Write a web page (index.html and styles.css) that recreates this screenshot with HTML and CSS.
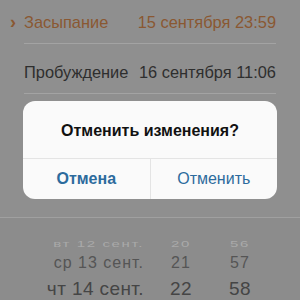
FILE: index.html
```html
<!DOCTYPE html>
<html lang="ru">
<head>
<meta charset="utf-8">
<link rel="stylesheet" href="styles.css">
</head>
<body>
<div class="screen">
  <div class="list">
    <div class="row active">
      <span class="label"><span class="chev">›</span>Засыпание</span>
      <span class="value">15 сентября 23:59</span>
    </div>
    <div class="row">
      <span class="label">Пробуждение</span>
      <span class="value">16 сентября 11:06</span>
    </div>
  </div>
  <div class="picker">
    <div class="prow far">
      <span class="pdate">вт 12 сент.</span><span class="ph">20</span><span class="pm">56</span>
    </div>
    <div class="prow mid">
      <span class="pdate">ср 13 сент.</span><span class="ph">21</span><span class="pm">57</span>
    </div>
    <div class="prow near">
      <span class="pdate">чт 14 сент.</span><span class="ph">22</span><span class="pm">58</span>
    </div>
  </div>
  <div class="alert">
    <div class="alert-title">Отменить изменения?</div>
    <div class="alert-actions">
      <div class="btn cancel">Отмена</div>
      <div class="btn confirm">Отменить</div>
    </div>
  </div>
</div>
</body>
</html>
```

FILE: styles.css
```css
html, body {
  margin: 0;
  padding: 0;
}
body {
  background: #8f8f8f;
  font-family: "Liberation Sans", "Noto Sans", sans-serif;
}
.screen {
  position: relative;
  width: 300px;
  height: 300px;
  overflow: hidden;
  background: #8f8f8f;
}
.list {
  margin-top: -6px;
}
.row {
  height: 50px;
  margin-left: 24px;
  margin-right: 24px;
  border-bottom: 1px solid #a3a3a3;
  display: flex;
  align-items: center;
  justify-content: space-between;
  font-size: 16.4px;
  color: #2e2e2e;
  padding-top: 7px;
  box-sizing: border-box;
}
.row .label {
  position: relative;
}
.row.active {
  color: #8a5832;
}
.chev {
  position: absolute;
  left: -14px;
  top: -1px;
  font-weight: bold;
  font-size: 18px;
}
.picker {
  margin-top: 123px;
  border-top: 1px solid #a0a0a0;
  height: 90px;
  background: #8c8c8c;
  padding-top: 16px;
  box-sizing: border-box;
}
.prow {
  display: grid;
  grid-template-columns: 144px 74px 44px;
  align-items: center;
}
.pdate {
  text-align: right;
}
.ph, .pm {
  text-align: center;
}
.prow.far {
  height: 18px;
  font-size: 15px;
  color: #a9a9a9;
  letter-spacing: 1.6px;
  transform: scaleY(0.62);
}
.prow.mid {
  height: 22px;
  font-size: 16px;
  color: #555555;
  letter-spacing: 1px;
}
.prow.near {
  height: 27px;
  font-size: 19px;
  color: #454545;
  letter-spacing: 0.4px;
  margin-top: 1px;
}
.alert {
  position: absolute;
  left: 23px;
  top: 101px;
  width: 254px;
  height: 98px;
  background: #fafafa;
  border-radius: 12px;
  display: flex;
  flex-direction: column;
  overflow: hidden;
}
.alert-title {
  height: 58px;
  display: flex;
  align-items: center;
  justify-content: center;
  font-size: 16px;
  font-weight: bold;
  color: #111;
  border-bottom: 1px solid #e4e4e4;
  padding-top: 3px;
  box-sizing: border-box;
}
.alert-actions {
  flex: 1;
  display: flex;
}
.btn {
  flex: 1;
  display: flex;
  align-items: center;
  justify-content: center;
  font-size: 16px;
  color: #2c6b9d;
}
.btn.cancel {
  font-weight: bold;
  border-right: 1px solid #e4e4e4;
}
```
